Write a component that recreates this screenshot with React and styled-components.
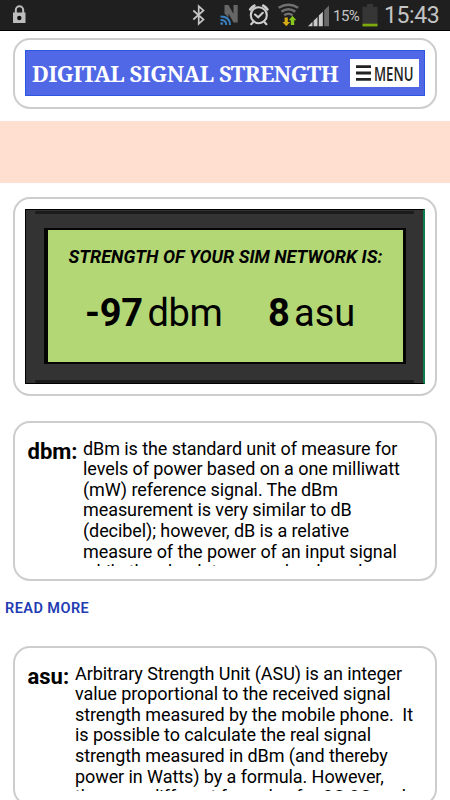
import React from "react";
import styled, { createGlobalStyle } from "styled-components";

const GlobalStyle = createGlobalStyle`
  * { box-sizing: border-box; }
  body { margin: 0; background: #fff; overflow: hidden; }
`;

const Screen = styled.div`
  width: 450px;
  height: 800px;
  overflow: hidden;
  background: #fff;
  color: #000;
  font-family: Roboto, "Liberation Sans", sans-serif;
`;

const StatusBar = styled.header`
  display: flex;
  height: 31px;
  padding-left: 12px;
  background: #1f1f1f;
  border-bottom: 1px solid #000;
  color: #c4c4c4;
`;

const StatusIcon = styled.svg`
  flex: none;
  display: block;
  width: ${(p) => p.$width}px;
  height: 30px;
  margin-left: ${(p) => p.$gap || 0}px;
`;

const StatusText = styled.span`
  flex: none;
  width: ${(p) => p.$width}px;
  margin-left: ${(p) => p.$gap}px;
  font-size: ${(p) => p.$size}px;
  line-height: ${(p) => p.$line}px;
  letter-spacing: ${(p) => p.$spacing || 0}px;
  white-space: nowrap;
`;

const Card = styled.section`
  height: ${(p) => p.$height}px;
  margin: ${(p) => p.$top}px 13px 0;
  padding: 10px 10px 0;
  border: 2px solid #cdcdcd;
  border-radius: 17px;
  background: #fff;
`;

const TitleBar = styled.div`
  display: flex;
  align-items: center;
  width: 400px;
  height: 46px;
  padding: 0 5px 0 6px;
  background: #5068e6;
  border: 1px solid #2c55e0;
`;

const Title = styled.h1`
  flex: none;
  width: 318px;
  margin: 0;
  color: #fff;
  font: bold 22px/44px "Noto Serif", "Droid Serif", "Liberation Serif", serif;
  letter-spacing: -0.45px;
  white-space: nowrap;
`;

const MenuButton = styled.button`
  display: flex;
  align-items: center;
  gap: 3px;
  width: 69px;
  height: 28px;
  padding: 0 0 0 6px;
  border: 0;
  background: #fff;
  color: #222;
`;

const MenuIcon = styled.svg`
  flex: none;
  width: 15px;
  height: 16px;
`;

const MenuLabel = styled.span`
  flex: none;
  width: 40px;
  font: 600 20.5px/28px "Open Sans", sans-serif;
  transform: scaleX(0.64);
  transform-origin: left center;
`;

const Banner = styled.div`
  height: 62px;
  margin-top: 12.5px;
  background: #ffdfd0;
`;

const Display = styled.div`
  width: 400px;
  height: 174.5px;
  padding: 19px 17px 0 19px;
  background: #333;
  border: solid #000;
  border-width: 1px 0 1px 1px;
  border-right: 2px solid #0a7f50;
  position: relative;

  &::before, &::after {
    content: "";
    position: absolute;
    left: 9px;
    right: 9px;
    height: 3px;
    border-radius: 2px;
    background: #1b1b1b;
  }
  &::before { top: 1px; }
  &::after { bottom: 0; }
`;

const Lcd = styled.div`
  width: 362px;
  height: 136px;
  margin-left: -1px;
  margin-top: -1px;
  border: solid #050505;
  border-width: 2px 3px 2px 4px;
  background: #b4d776;
`;

const LcdHeading = styled.h2`
  margin: 15px 0 0 20.5px;
  font: italic bold 18px/24px Roboto, sans-serif;
  letter-spacing: 0;
  white-space: nowrap;
`;

const Readings = styled.div`
  display: flex;
  align-items: baseline;
  margin: 21px 0 0 37px;
  line-height: 46px;
`;

const Value = styled.b`
  flex: none;
  width: ${(p) => p.$width}px;
  font-size: 38px;
  letter-spacing: ${(p) => p.$spacing || 0}px;
`;

const Unit = styled.span`
  flex: none;
  width: ${(p) => p.$width}px;
  font-size: 38px;
  font-weight: 400;
  letter-spacing: ${(p) => p.$spacing || 0}px;
`;

const Definition = styled.div`
  display: flex;
  height: 133px;
  padding-left: 2.5px;
  overflow: hidden;
`;

const Term = styled.b`
  flex: none;
  width: ${(p) => p.$width}px;
  font-size: 22px;
  line-height: 38px;
  letter-spacing: ${(p) => p.$spacing || 0}px;
`;

const Description = styled.p`
  margin: 5.5px 0 0;
  font-size: 18px;
  line-height: 20.65px;
  letter-spacing: -0.08px;
  white-space: pre;
`;

const ReadMore = styled.a`
  display: block;
  margin: 17.5px 0 0 5px;
  color: #1f3cb4;
  font-size: 14.5px;
  line-height: 20px;
  font-weight: 600;
  letter-spacing: 0.45px;
  white-space: nowrap;
`;

const dbmText = `dBm is the standard unit of measure for
levels of power based on a one milliwatt
(mW) reference signal. The dBm
measurement is very similar to dB
(decibel); however, dB is a relative
measure of the power of an input signal
while the absolute power level can be`;

const asuText = `Arbitrary Strength Unit (ASU) is an integer
value proportional to the received signal
strength measured by the mobile phone.  It
is possible to calculate the real signal
strength measured in dBm (and thereby
power in Watts) by a formula. However,
there are different formulas for 2G 3G and`;

function StatusIcons() {
  return (
    <>
      <StatusIcon $width={14} viewBox="0 0 14 30">
        <path d="M3.8 13V10a3.7 3.7 0 0 1 7.4 0v3" fill="none" stroke="#bcbcbc" strokeWidth="2" />
        <rect x="1" y="12.5" width="12.5" height="10.5" fill="#bcbcbc" />
        <circle cx="7.3" cy="18" r="2.2" fill="#111" />
      </StatusIcon>
      <StatusIcon $width={13} $gap={166} viewBox="192 0 13 30">
        <path d="M193.3 10.5 203.5 19.5 198.7 23.8V6.2L203.5 10.5 193.3 19.5" fill="none" stroke="#c4c4c4" strokeWidth="1.7" />
      </StatusIcon>
      <StatusIcon $width={19} $gap={15} viewBox="220 0 19 30">
        <path d="M224.5 13.5V5h4l5 9V5h4.2v17.5h-4.2l-5-9v4z" fill="#666" />
        <g fill="none" stroke="#397fbd" strokeWidth="1.9">
          <path d="M220.5 16.5q9.5 0 9.5 8.5M220.5 20q5.8 0 5.8 5" />
        </g>
        <circle cx="221.7" cy="23.6" r="1.4" fill="#397fbd" />
      </StatusIcon>
      <StatusIcon $width={21} $gap={9} viewBox="248 0 21 30">
        <g fill="none" stroke="#cecece" strokeWidth="2.1" strokeLinecap="round">
          <circle cx="258.8" cy="15.2" r="8" />
          <path d="M255 14.5 258.2 17.3 262.8 12.8M253 22.2 251.2 24.2M264.6 22.2 266.4 24.2" />
          <path d="M250.2 9.5a11 11 0 0 1 4.2-3.8M267.4 9.5a11 11 0 0 0-4.2-3.8" strokeWidth="2.6" />
        </g>
      </StatusIcon>
      <StatusIcon $width={22} $gap={9} viewBox="278 0 22 30">
        <g fill="none" stroke="#707070" strokeWidth="2.5">
          <path d="M278.6 7.8q9.8-6 19.6 0M281.5 11.6q7-4.6 13.8 0M284.2 15.2q4.2-2.8 8.4 0" />
        </g>
        <path d="M284.6 17.5h3.2v4.5h2.3l-3.8 4.2-3.9-4.2h2.2z" fill="#d9ac15" />
        <path d="M290.8 25v-4.8h-2.1l3.8-4.5 3.8 4.5h-2.1V25z" fill="#86c71b" />
      </StatusIcon>
      <StatusIcon $width={22} $gap={8} viewBox="308 0 22 30">
        <g fill="#c9c9c9">
          <path d="M308 26.2 312.5 21.8V26.2z" />
          <path d="M313.6 20.7 317.5 16.9V26.2H313.6z" />
          <path d="M318.8 15.6 322.8 11.7V26.2H318.8z" />
        </g>
        <path d="M324.2 10.3 329 5.5V26.2H324.2z" fill="#696969" />
      </StatusIcon>
      <StatusText $width={27} $gap={3} $size={15} $line={32} $spacing={-0.5}>15%</StatusText>
      <StatusIcon $width={16} $gap={2} viewBox="362 0 16 30">
        <path d="M367 4h6v2.8h4.5v19.4h-15V6.8h4.5z" fill="#363636" />
        <path d="M362.5 23.7h15v2.7h-15z" fill="#7eaa0b" />
      </StatusIcon>
      <StatusText $width={56} $gap={6} $size={23} $line={31} $spacing={-0.4}>15:43</StatusText>
    </>
  );
}

export default function App() {
  return (
    <Screen>
      <GlobalStyle />
      <StatusBar><StatusIcons /></StatusBar>
      <Card $height={70.5} $top={7}>
        <TitleBar>
          <Title>DIGITAL SIGNAL STRENGTH</Title>
          <MenuButton>
            <MenuIcon viewBox="0 0 15 16">
              <path d="M0 1.7h15M0 8h15M0 14.3h15" stroke="#222" strokeWidth="2.8" />
            </MenuIcon>
            <MenuLabel>MENU</MenuLabel>
          </MenuButton>
        </TitleBar>
      </Card>
      <Banner />
      <Card $height={199} $top={14}>
        <Display>
          <Lcd>
            <LcdHeading>STRENGTH OF YOUR SIM NETWORK IS:</LcdHeading>
            <Readings>
              <Value $width={62.5} $spacing={-0.3}>-97</Value>
              <Unit $width={120.5} $spacing={-0.4}>dbm</Unit>
              <Value $width={26}>8</Value>
              <Unit $width={60}>asu</Unit>
            </Readings>
          </Lcd>
        </Display>
      </Card>
      <Card $height={160} $top={25}>
        <Definition>
          <Term $width={55.5}>dbm:</Term>
          <Description>{dbmText}</Description>
        </Definition>
      </Card>
      <ReadMore>READ MORE</ReadMore>
      <Card $height={160} $top={27.5}>
        <Definition>
          <Term $width={47.5}>asu:</Term>
          <Description>{asuText}</Description>
        </Definition>
      </Card>
    </Screen>
  );
}
